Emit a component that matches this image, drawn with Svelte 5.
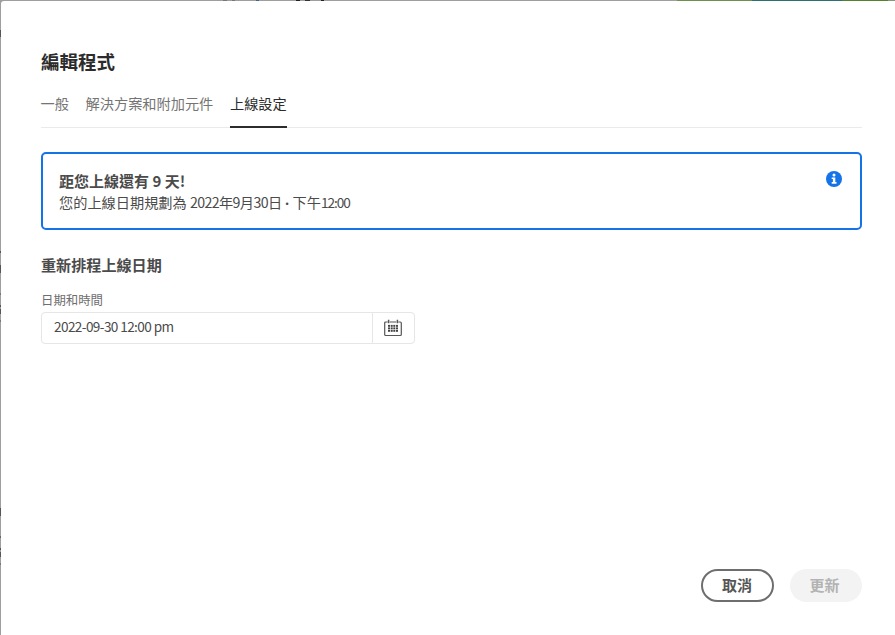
<script>
  let active = $state(2);
  let date = $state('2022-09-30 12:00 pm');
  const tabs = ['一般', '解決方案和附加元件', '上線設定'];
  const dots = [6.5, 9, 11.5].flatMap((y) => [5, 7.7, 10.3, 13].map((x) => ({ x, y })));
</script>

<div class="backdrop">
  <main class="dialog">
    <h1>編輯程式</h1>
    <nav>
      {#each tabs as tab, i}
        <button class="tab" class:active={active === i} onclick={() => (active = i)}>{tab}</button>
      {/each}
    </nav>

    <section class="alert">
      <div>
        <h2>距您上線還有 9 天!</h2>
        <p>您的上線日期規劃為 <span class="date">2022年9月30日</span><span class="bullet">•</span>下午<span class="time">12:00</span></p>
      </div>
      <svg class="info" width="16" height="16" viewBox="0 0 16 16">
        <circle cx="8" cy="8" r="8" fill="#1473e6" />
        <circle cx="8" cy="3.9" r="1.5" fill="#fff" />
        <path d="M5.7 6.4h3.6v4.7h1.2v1.6H5.7v-1.6h1.2V8H5.7z" fill="#fff" />
      </svg>
    </section>

    <h3>重新排程上線日期</h3>
    <label for="date">日期和時間</label>
    <div class="picker">
      <input id="date" type="text" bind:value={date} />
      <button class="calendar" aria-label="日期和時間">
        <svg width="18" height="18" viewBox="0 0 18 18" fill="none" stroke="#555">
          <path d="M3.6 3H1.7q-1 0-1 1v11.5q0 1 1 1h14.6q1 0 1-1V4q0-1-1-1h-1.9M5.8 3h6.4" stroke-width="1.2" />
          <path d="M4.6 .7v3.6M13.4 .7v3.6" stroke-width="1.5" />
          {#each dots as dot}
            <rect x={dot.x - 1} y={dot.y - 0.6} width="2" height="1.9" fill="#444" stroke="none" />
          {/each}
        </svg>
      </button>
    </div>

    <footer>
      <button class="pill cancel">取消</button>
      <button class="pill update" disabled>更新</button>
    </footer>
  </main>
</div>

<style>
  :global(body) {
    margin: 0;
    overflow: hidden;
  }
  * {
    box-sizing: border-box;
  }
  .backdrop {
    height: 635px;
    padding: 1px 0 0 1px;
    font-family: 'Noto Sans CJK TC', sans-serif;
    color: #4b4b4b;
    background:
      linear-gradient(90deg, transparent 223px, #777 223px 227px, transparent 227px 232px, #777 232px 235px, transparent 235px 256px, #3b6794 256px 259px, transparent 259px 296px, #222 296px 300px, transparent 300px 305px, #333 305px 310px, transparent 310px 321px, #222 321px 324px, transparent 324px 677px, #6e9150 677px 752px, #2c7074 752px 842px, #52822b 842px 888px, #87967c 888px) 0 0 / 100% 1px no-repeat,
      linear-gradient(transparent 30px, #555 30px 37px, transparent 37px 251px, #555 251px 253px, transparent 253px 265px, #555 265px 273px, transparent 273px 293px, #777 293px 295px, transparent 295px 305px, #555 305px 307px, transparent 307px 309px, #555 309px 314px, transparent 314px 320px, #777 320px 322px, transparent 322px 508px, #555 508px 516px, transparent 516px 536px, #666 536px 538px, transparent 538px 548px, #555 548px 550px, transparent 550px 552px, #555 552px 557px, transparent 557px 563px, #777 563px 565px, transparent 565px) 0 0 / 1px 100% no-repeat,
      #9e9e9e;
  }
  .dialog {
    height: 634px;
    padding: 45px 33px 33px 40px;
    display: flex;
    flex-direction: column;
    background: #fff;
    border-top-left-radius: 3px;
  }
  h1, h2, h3, p {
    margin: 0;
  }
  button {
    font-family: inherit;
    padding: 0;
    border: 0;
    background: none;
  }
  h1 {
    font-size: 18.5px;
    line-height: 30px;
    color: #2c2c2c;
  }
  nav {
    display: flex;
    gap: 16.7px;
    height: 52px;
    margin-bottom: 24px;
    border-bottom: 1px solid #eaeaea;
  }
  .tab {
    height: 52px;
    padding: 4px 0 0;
    display: flex;
    align-items: flex-start;
    font-size: 14.2px;
    line-height: 46px;
    color: #747474;
    border-bottom: 2px solid transparent;
    white-space: nowrap;
  }
  .tab:first-child {
    margin-left: -0.5px;
  }
  .tab.active {
    color: #2c2c2c;
    border-color: #2c2c2c;
  }
  .alert {
    height: 78px;
    padding: 16px 18px 0 16px;
    display: flex;
    justify-content: space-between;
    border: 2px solid #1473e6;
    border-radius: 5px;
  }
  .info {
    margin-top: 1px;
  }
  h2 {
    font-size: 15px;
    line-height: 21px;
  }
  .alert p {
    padding-top: 1px;
    font-size: 14.2px;
    line-height: 21px;
  }
  .date {
    letter-spacing: -0.6px;
  }
  .bullet {
    display: inline-block;
    width: 11px;
    text-align: center;
    font: 9px 'Liberation Sans', sans-serif;
    vertical-align: 1px;
  }
  .time {
    font-size: 13.6px;
    letter-spacing: -1px;
  }
  h3 {
    margin-top: 23px;
    font-size: 15.1px;
    line-height: 23px;
  }
  label {
    margin-top: 15px;
    font-size: 12.4px;
    line-height: 18px;
    color: #6e6e6e;
  }
  .picker {
    display: flex;
    width: 374px;
    height: 32px;
    margin-top: 3px;
    border: 1px solid #e6e6e6;
    border-radius: 4px;
  }
  input {
    flex: 1;
    min-width: 0;
    padding: 0 12px 4px;
    border: 0;
    outline: 0;
    background: none;
    font: 13.6px 'Noto Sans CJK TC', sans-serif;
    letter-spacing: -0.6px;
    color: #4b4b4b;
  }
  .calendar {
    width: 42px;
    padding-right: 1px;
    display: grid;
    place-items: center;
    border-left: 1px solid #e6e6e6;
  }
  footer {
    margin-top: auto;
    display: flex;
    justify-content: flex-end;
    gap: 16px;
  }
  .pill {
    width: 73px;
    height: 33px;
    padding-bottom: 2px;
    border-radius: 17px;
    font-size: 15px;
    font-weight: 700;
    line-height: 26px;
  }
  .cancel {
    padding-right: 1px;
    border: 2px solid #6e6e6e;
    color: #555;
  }
  .update {
    width: 72px;
    padding-right: 3px;
    background: #f3f3f3;
    color: #b3b3b3;
  }
</style>
